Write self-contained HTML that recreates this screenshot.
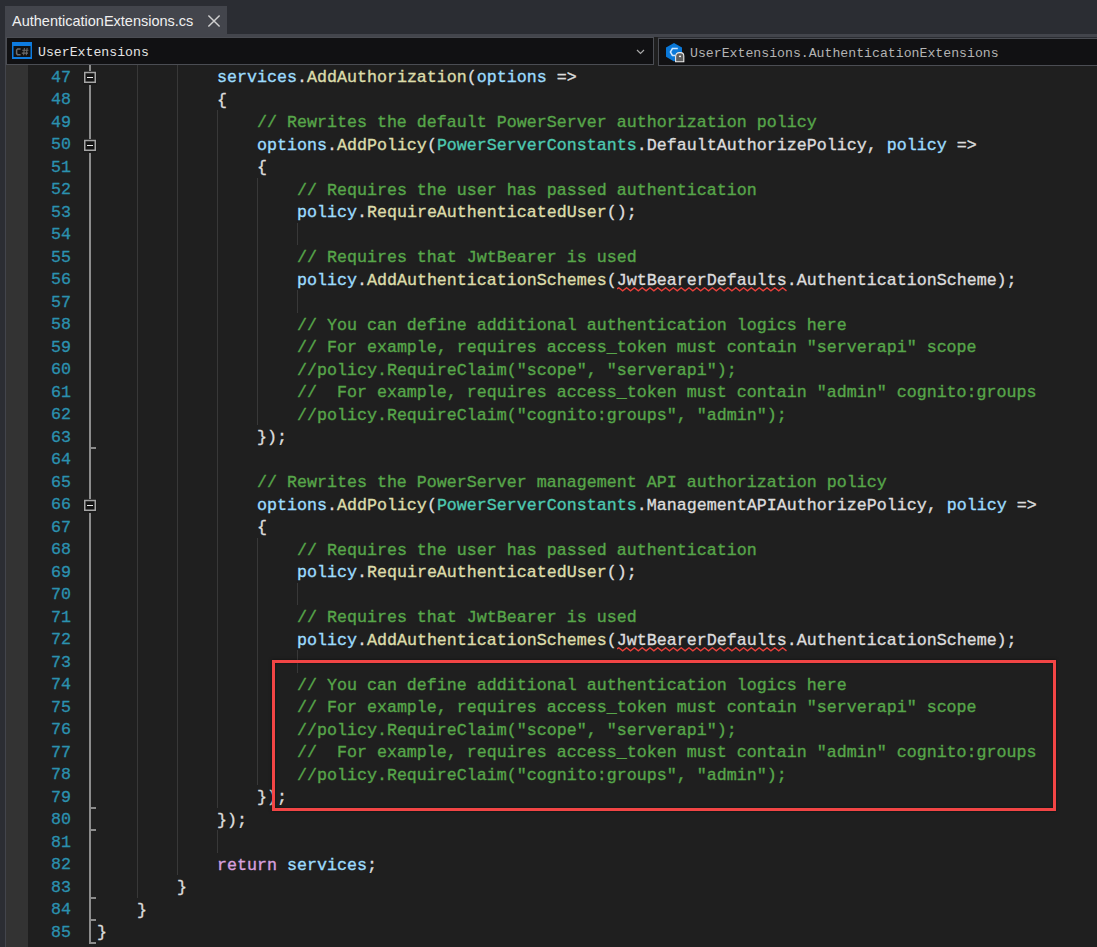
<!DOCTYPE html>
<html><head><meta charset="utf-8"><style>
html,body{margin:0;padding:0}
body{width:1097px;height:947px;overflow:hidden;position:relative;background:#2b2d33;font-family:"Liberation Mono",monospace}
.abs{position:absolute}
#tab{position:absolute;left:5px;top:6px;width:222px;height:28px;background:#43454c}
#tabt{position:absolute;left:7px;top:6.5px;font:14.5px "Liberation Sans",sans-serif;color:#f0f0f0;white-space:nowrap}
#band{position:absolute;left:5px;top:34px;width:1092px;height:3px;background:#43454c}
#lb{position:absolute;left:5px;top:34px;width:1px;height:913px;background:#43454c}
#nav1{position:absolute;left:6px;top:37px;width:646px;height:26px;border:1px solid #4b4d53;background:#111113}
#navgap{position:absolute;left:654px;top:37px;width:4px;height:28px;background:#1f1f1f}
#nav2{position:absolute;left:658px;top:38px;width:440px;height:26px;border:1px solid #4b4d53;background:#111113}
.navt{position:absolute;font-size:13.2px;color:#e4e4e4;white-space:nowrap;top:6.5px}
#editor{position:absolute;left:6px;top:65px;width:1091px;height:882px;background:#1f1f1f}
#gm{position:absolute;left:6px;top:65px;width:22px;height:882px;background:#333333}
.ln{position:absolute;left:97px;height:22.5px;line-height:22.5px;font-size:16.667px;color:#dcdcdc;white-space:pre;-webkit-text-stroke:0.35px currentColor}
.num{position:absolute;left:31px;width:40px;text-align:right;height:22.5px;line-height:22.5px;font-size:16.667px;color:#2b91af;-webkit-text-stroke:0.3px currentColor}
.p{color:#9cdcfe} .m{color:#dcdcaa} .c{color:#57a64a} .t{color:#4ec9b0} .k{color:#d8a0df} .e{color:#dcdcdc}
.g{position:absolute;width:1px;background:#383838}
.ov{position:absolute;left:89px;width:2px;background:#8c8c8c}
.ob{position:absolute;left:84px;width:8px;height:8px;border:2px solid #a4a4a4;background:#141414;box-shadow:0 0 0 1px #1a1a1a}
.ob i{position:absolute;left:1px;top:3px;width:6px;height:1px;background:#e8e8e8}
.ot{position:absolute;left:89px;width:7px;height:2px;background:#8c8c8c}
.sq{position:absolute}
#redbox{position:absolute;left:272px;top:660px;width:778px;height:145px;border:3px solid #f24545;box-shadow:0 0 3px rgba(0,0,0,0.5),inset 0 0 3px rgba(0,0,0,0.45)}
</style></head><body>
<div id="editor"></div>
<div id="gm"></div>
<div id="tab"><div id="tabt">AuthenticationExtensions.cs</div>
<svg class="abs" style="left:202px;top:8px" width="14" height="14"><path d="M1.4 1.4L12.6 12.6M12.6 1.4L1.4 12.6" stroke="#d0d0d0" stroke-width="1.45"/></svg>
</div>
<div id="band"></div>
<div id="lb"></div>
<div id="nav1">
<svg class="abs" style="left:5px;top:4px" width="20" height="17"><rect x="0" y="0" width="20" height="17" fill="#0e7ce0"/><rect x="1.5" y="4" width="17" height="11" fill="#111111"/><path d="M8.6 6.9H5.6L4.6 8V11.6L5.6 12.7H8.6" stroke="#6c6c6c" stroke-width="1.5" fill="none"/><path d="M10.2 8.3H16.4M9.8 11.1H16M12.4 6L11.6 13.2M15.1 6L14.3 13.2" stroke="#6c6c6c" stroke-width="1.05" fill="none"/></svg>
<div class="navt" style="left:31px">UserExtensions</div>
<svg class="abs" style="left:629px;top:11px" width="9" height="6"><path d="M1 1L4.5 4.5L8 1" stroke="#a8a8a8" stroke-width="1.2" fill="none"/></svg>
</div>
<div id="navgap"></div>
<div id="nav2">
<svg class="abs" style="left:0px;top:0px" width="40" height="26"><path d="M15.00 4.00L23.00 8.60L23.00 17.80L15.00 22.40L7.00 17.80L7.00 8.60Z" fill="#0a78d8"/><path d="M18.80 9.60L13.40 9.60L11.40 13.00L13.40 16.40L16.00 16.40" stroke="#cde6ff" stroke-width="1.5" fill="none"/><path d="M16.60 22.80 L16.60 17.50 Q16.60 13.60 20.50 13.60 L21.50 13.60 Q24.80 13.60 24.80 17.00 L24.80 22.80 Z" fill="#5e5e5e" stroke="#ececec" stroke-width="1.1"/><ellipse cx="21" cy="17.299999999999997" rx="1.1" ry="0.9" fill="#f4f4f4"/></svg>
<div class="navt" style="left:31px;color:#b4b4b4">UserExtensions.AuthenticationExtensions</div>
</div>
<div class="g" style="left:137px;top:65px;height:832.5px"></div><div class="g" style="left:177px;top:65px;height:810.0px"></div><div class="g" style="left:217px;top:110.0px;height:697.5px"></div><div class="g" style="left:217px;top:830.0px;height:22.5px"></div><div class="g" style="left:257px;top:177.5px;height:247.5px"></div><div class="g" style="left:257px;top:537.5px;height:247.5px"></div><div class="g" style="left:297px;top:222.5px;height:22.5px"></div><div class="g" style="left:297px;top:290.0px;height:22.5px"></div><div class="g" style="left:297px;top:582.5px;height:22.5px"></div><div class="g" style="left:297px;top:650.0px;height:22.5px"></div>
<div class="ov" style="top:65px;height:877.5px"></div><svg class="abs" style="left:83px;top:71px" width="14" height="14"><rect x="0" y="0" width="14" height="14" fill="#1b1b1b"/><rect x="1.75" y="1.5" width="10.5" height="9.75" fill="#141414" stroke="#a4a4a4" stroke-width="1.5"/><rect x="4" y="6" width="6" height="1" fill="#ececec"/></svg><svg class="abs" style="left:83px;top:139px" width="14" height="14"><rect x="0" y="0" width="14" height="14" fill="#1b1b1b"/><rect x="1.75" y="1.5" width="10.5" height="9.75" fill="#141414" stroke="#a4a4a4" stroke-width="1.5"/><rect x="4" y="6" width="6" height="1" fill="#ececec"/></svg><svg class="abs" style="left:83px;top:499px" width="14" height="14"><rect x="0" y="0" width="14" height="14" fill="#1b1b1b"/><rect x="1.75" y="1.5" width="10.5" height="9.75" fill="#141414" stroke="#a4a4a4" stroke-width="1.5"/><rect x="4" y="6" width="6" height="1" fill="#ececec"/></svg><div class="ot" style="top:446.5px"></div><div class="ot" style="top:806.5px"></div><div class="ot" style="top:829.0px"></div><div class="ot" style="top:896.5px"></div><div class="ot" style="top:919.0px"></div><div class="ot" style="top:941.5px"></div>
<div class="ln" style="top:67.0px">            <span class="p">services</span>.<span class="m">AddAuthorization</span>(<span class="p">options</span> =&gt;</div><div class="num" style="top:66.5px">47</div><div class="ln" style="top:89.5px">            {</div><div class="num" style="top:89.0px">48</div><div class="ln" style="top:112.0px">                <span class="c">// Rewrites the default PowerServer authorization policy</span></div><div class="num" style="top:111.5px">49</div><div class="ln" style="top:134.5px">                <span class="p">options</span>.<span class="m">AddPolicy</span>(<span class="t">PowerServerConstants</span>.DefaultAuthorizePolicy, <span class="p">policy</span> =&gt;</div><div class="num" style="top:134.0px">50</div><div class="ln" style="top:157.0px">                {</div><div class="num" style="top:156.5px">51</div><div class="ln" style="top:179.5px">                    <span class="c">// Requires the user has passed authentication</span></div><div class="num" style="top:179.0px">52</div><div class="ln" style="top:202.0px">                    <span class="p">policy</span>.<span class="m">RequireAuthenticatedUser</span>();</div><div class="num" style="top:201.5px">53</div><div class="ln" style="top:224.5px"></div><div class="num" style="top:224.0px">54</div><div class="ln" style="top:247.0px">                    <span class="c">// Requires that JwtBearer is used</span></div><div class="num" style="top:246.5px">55</div><div class="ln" style="top:269.5px">                    <span class="p">policy</span>.<span class="m">AddAuthenticationSchemes</span>(<span class="e">JwtBearerDefaults</span>.AuthenticationScheme);</div><div class="num" style="top:269.0px">56</div><div class="ln" style="top:292.0px"></div><div class="num" style="top:291.5px">57</div><div class="ln" style="top:314.5px">                    <span class="c">// You can define additional authentication logics here</span></div><div class="num" style="top:314.0px">58</div><div class="ln" style="top:337.0px">                    <span class="c">// For example, requires access_token must contain &quot;serverapi&quot; scope</span></div><div class="num" style="top:336.5px">59</div><div class="ln" style="top:359.5px">                    <span class="c">//policy.RequireClaim(&quot;scope&quot;, &quot;serverapi&quot;);</span></div><div class="num" style="top:359.0px">60</div><div class="ln" style="top:382.0px">                    <span class="c">//  For example, requires access_token must contain &quot;admin&quot; cognito:groups</span></div><div class="num" style="top:381.5px">61</div><div class="ln" style="top:404.5px">                    <span class="c">//policy.RequireClaim(&quot;cognito:groups&quot;, &quot;admin&quot;);</span></div><div class="num" style="top:404.0px">62</div><div class="ln" style="top:427.0px">                });</div><div class="num" style="top:426.5px">63</div><div class="ln" style="top:449.5px"></div><div class="num" style="top:449.0px">64</div><div class="ln" style="top:472.0px">                <span class="c">// Rewrites the PowerServer management API authorization policy</span></div><div class="num" style="top:471.5px">65</div><div class="ln" style="top:494.5px">                <span class="p">options</span>.<span class="m">AddPolicy</span>(<span class="t">PowerServerConstants</span>.ManagementAPIAuthorizePolicy, <span class="p">policy</span> =&gt;</div><div class="num" style="top:494.0px">66</div><div class="ln" style="top:517.0px">                {</div><div class="num" style="top:516.5px">67</div><div class="ln" style="top:539.5px">                    <span class="c">// Requires the user has passed authentication</span></div><div class="num" style="top:539.0px">68</div><div class="ln" style="top:562.0px">                    <span class="p">policy</span>.<span class="m">RequireAuthenticatedUser</span>();</div><div class="num" style="top:561.5px">69</div><div class="ln" style="top:584.5px"></div><div class="num" style="top:584.0px">70</div><div class="ln" style="top:607.0px">                    <span class="c">// Requires that JwtBearer is used</span></div><div class="num" style="top:606.5px">71</div><div class="ln" style="top:629.5px">                    <span class="p">policy</span>.<span class="m">AddAuthenticationSchemes</span>(<span class="e">JwtBearerDefaults</span>.AuthenticationScheme);</div><div class="num" style="top:629.0px">72</div><div class="ln" style="top:652.0px"></div><div class="num" style="top:651.5px">73</div><div class="ln" style="top:674.5px">                    <span class="c">// You can define additional authentication logics here</span></div><div class="num" style="top:674.0px">74</div><div class="ln" style="top:697.0px">                    <span class="c">// For example, requires access_token must contain &quot;serverapi&quot; scope</span></div><div class="num" style="top:696.5px">75</div><div class="ln" style="top:719.5px">                    <span class="c">//policy.RequireClaim(&quot;scope&quot;, &quot;serverapi&quot;);</span></div><div class="num" style="top:719.0px">76</div><div class="ln" style="top:742.0px">                    <span class="c">//  For example, requires access_token must contain &quot;admin&quot; cognito:groups</span></div><div class="num" style="top:741.5px">77</div><div class="ln" style="top:764.5px">                    <span class="c">//policy.RequireClaim(&quot;cognito:groups&quot;, &quot;admin&quot;);</span></div><div class="num" style="top:764.0px">78</div><div class="ln" style="top:787.0px">                });</div><div class="num" style="top:786.5px">79</div><div class="ln" style="top:809.5px">            });</div><div class="num" style="top:809.0px">80</div><div class="ln" style="top:832.0px"></div><div class="num" style="top:831.5px">81</div><div class="ln" style="top:854.5px">            <span class="k">return</span> <span class="p">services</span>;</div><div class="num" style="top:854.0px">82</div><div class="ln" style="top:877.0px">        }</div><div class="num" style="top:876.5px">83</div><div class="ln" style="top:899.5px">    }</div><div class="num" style="top:899.0px">84</div><div class="ln" style="top:922.0px">}</div><div class="num" style="top:921.5px">85</div>
<svg class="sq" style="left:617px;top:287.0px" width="176" height="5"><polyline fill="none" stroke="#e8413c" stroke-width="1.4" points="0,1.8 1.80,0.8 5.70,3.9 9.60,0.8 13.50,3.9 17.40,0.8 21.30,3.9 25.20,0.8 29.10,3.9 33.00,0.8 36.90,3.9 40.80,0.8 44.70,3.9 48.60,0.8 52.50,3.9 56.40,0.8 60.30,3.9 64.20,0.8 68.10,3.9 72.00,0.8 75.90,3.9 79.80,0.8 83.70,3.9 87.60,0.8 91.50,3.9 95.40,0.8 99.30,3.9 103.20,0.8 107.10,3.9 111.00,0.8 114.90,3.9 118.80,0.8 122.70,3.9 126.60,0.8 130.50,3.9 134.40,0.8 138.30,3.9 142.20,0.8 146.10,3.9 150.00,0.8 153.90,3.9 157.80,0.8 161.70,3.9 165.60,0.8 169.50,3.9"/></svg><svg class="sq" style="left:617px;top:647.0px" width="176" height="5"><polyline fill="none" stroke="#e8413c" stroke-width="1.4" points="0,1.8 1.80,0.8 5.70,3.9 9.60,0.8 13.50,3.9 17.40,0.8 21.30,3.9 25.20,0.8 29.10,3.9 33.00,0.8 36.90,3.9 40.80,0.8 44.70,3.9 48.60,0.8 52.50,3.9 56.40,0.8 60.30,3.9 64.20,0.8 68.10,3.9 72.00,0.8 75.90,3.9 79.80,0.8 83.70,3.9 87.60,0.8 91.50,3.9 95.40,0.8 99.30,3.9 103.20,0.8 107.10,3.9 111.00,0.8 114.90,3.9 118.80,0.8 122.70,3.9 126.60,0.8 130.50,3.9 134.40,0.8 138.30,3.9 142.20,0.8 146.10,3.9 150.00,0.8 153.90,3.9 157.80,0.8 161.70,3.9 165.60,0.8 169.50,3.9"/></svg>
<div id="redbox"></div>
</body></html>
